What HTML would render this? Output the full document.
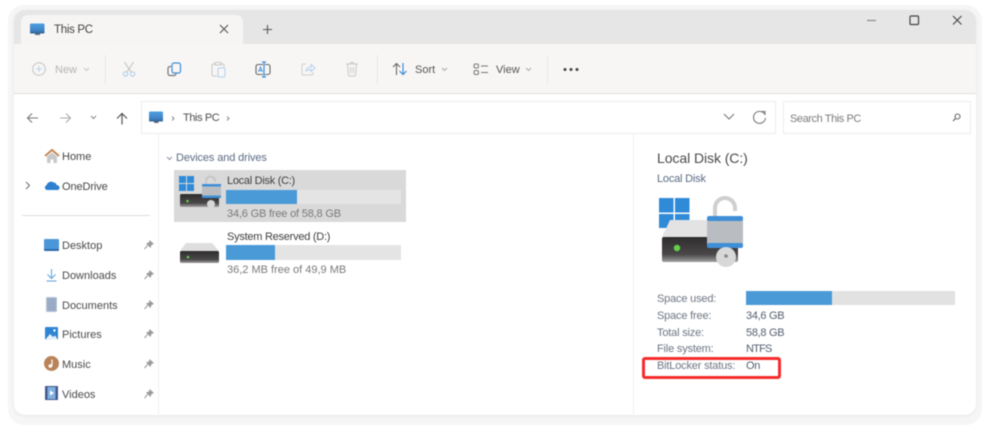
<!DOCTYPE html>
<html><head><meta charset="utf-8"><style>
html,body{margin:0;padding:0;background:#fff}
#p{position:relative;width:990px;height:432px;overflow:hidden;background:#fff;font-family:"Liberation Sans",sans-serif;color:#444;filter:blur(.6px)}
#p *{box-sizing:border-box}
.t{position:absolute;white-space:nowrap;font-size:11px;line-height:14px;color:#4a4a4a}
.b{position:absolute}
svg{position:absolute;overflow:visible}
.g{color:#6d7583;letter-spacing:-.18px}
.v{color:#555e6e;letter-spacing:-.3px}
</style></head><body><div id="p">
<svg width="0" height="0" style="left:0;top:0"><defs>
<linearGradient id="mon" x1="0" y1="0" x2="0" y2="1"><stop offset="0" stop-color="#4f9fe2"/><stop offset=".7" stop-color="#3f83c6"/><stop offset="1" stop-color="#2f5f8f"/></linearGradient>
<linearGradient id="drv" x1="0" y1="0" x2="0" y2="1"><stop offset="0" stop-color="#2e2c2c"/><stop offset=".7" stop-color="#4a4848"/><stop offset="1" stop-color="#a0a0a0"/></linearGradient>
</defs></svg>
<div class="b" style="left:8px;top:5px;width:974px;height:420px;border-radius:16px;background:#f6f6f6"></div>
<div class="b" style="left:14px;top:10px;width:962px;height:405px;border-radius:11px;background:#fff;overflow:hidden;box-shadow:0 1px 3px #e6e6e6">
 <div class="b" style="left:0;top:0;width:962px;height:34px;background:#e6e6e6"></div>
 <div class="b" style="left:7px;top:5px;width:222px;height:29px;background:#f6f5f4;border-radius:7px 7px 0 0"></div>
 <div class="b" style="left:0;top:34px;width:962px;height:50px;background:#f7f6f5;border-bottom:1px solid #dedede"></div>
</div>

<!-- tab -->
<svg style="left:30px;top:23px" width="15" height="14"><rect x="0" y="0.500" width="14.500" height="10" rx="1" fill="url(#mon)"/><rect x="5" y="10.500" width="5" height="1.500" fill="#667"/></svg>
<div class="t" style="left:54px;top:23px;font-size:11.500px;color:#444;letter-spacing:-.3px">This PC</div>
<svg style="left:219px;top:24px" width="10" height="10"><path d="M1 1L9 9M9 1L1 9" stroke="#555" stroke-width="1.100"/></svg>
<svg style="left:262px;top:24px" width="11" height="11"><path d="M5.500 1V10M1 5.500H10" stroke="#555" stroke-width="1.100"/></svg>

<!-- window controls -->
<svg style="left:866px;top:14px" width="102" height="14"><path d="M1 6.500H10" stroke="#8a8a8a" stroke-width="1.200"/><rect x="44" y="2" width="8.500" height="8.500" rx="1" fill="none" stroke="#444" stroke-width="1.200"/><path d="M87 2L95.500 10.500M95.500 2L87 10.500" stroke="#444" stroke-width="1.100"/></svg>

<!-- toolbar -->
<svg style="left:32px;top:62px" width="15" height="15"><circle cx="7" cy="7" r="6.300" fill="none" stroke="#c4c4c4"/><path d="M7 4V10M4 7H10" stroke="#bcd3ea" stroke-width="1"/></svg>
<div class="t" style="left:55px;top:63px;color:#b4b4b4">New</div>
<svg style="left:83px;top:67px" width="7" height="5"><path d="M1 1L3.500 3.500L6 1" fill="none" stroke="#c4c4c4"/></svg>
<div class="b" style="left:105px;top:55px;width:1px;height:29px;background:#e6e6e6"></div>
<svg style="left:122px;top:61px" width="15" height="17"><path d="M2.500 1L9 11M11.500 1L5 11" stroke="#c0c0c0" fill="none"/><circle cx="3.500" cy="13" r="2.200" fill="none" stroke="#a9c9ea"/><circle cx="10.500" cy="13" r="2.200" fill="none" stroke="#a9c9ea"/></svg>
<svg style="left:167px;top:62px" width="15" height="15"><rect x="5" y="1" width="8.500" height="10" rx="2" fill="none" stroke="#3e8ed8" stroke-width="1.200"/><path d="M4 4.500H3A2 2 0 0 0 1 6.500V11.500A2 2 0 0 0 3 13.500H7A2 2 0 0 0 9 11.500" fill="none" stroke="#777" stroke-width="1.200"/></svg>
<svg style="left:211px;top:61px" width="15" height="17"><path d="M4 3H2A1 1 0 0 0 1 4V14A1 1 0 0 0 2 15H6M10 3H12A1 1 0 0 1 13 4V6" fill="none" stroke="#c8c8c8"/><rect x="4" y="1.500" width="6" height="2.500" fill="none" stroke="#c8c8c8"/><rect x="7" y="7" width="7" height="9" rx="1" fill="none" stroke="#b3d1ee"/></svg>
<svg style="left:255px;top:61px" width="17" height="17"><path d="M8 3.500H3A2 2 0 0 0 1 5.500V11.500A2 2 0 0 0 3 13.500H8M10 3.500H13A2 2 0 0 1 15 5.500V11.500A2 2 0 0 1 13 13.500H10" fill="none" stroke="#666" stroke-width="1.100"/><path d="M9 1V16M7 1H11M7 16H11" fill="none" stroke="#3e8ed8" stroke-width="1.200"/><path d="M3.500 11L5.500 6L7.500 11M4.500 9.500H6.500" fill="none" stroke="#3e8ed8" stroke-width=".9"/></svg>
<svg style="left:301px;top:62px" width="15" height="15"><path d="M5 2H2.500A1.500 1.500 0 0 0 1 3.500V11.500A1.500 1.500 0 0 0 2.500 13H10.500A1.500 1.500 0 0 0 12 11.500V10" fill="none" stroke="#cfcfcf"/><path d="M5 9C5.500 6 8 5 10 5V2.500L14 6L10 9.500V7.500C8 7.500 6.500 8 5 9Z" fill="none" stroke="#b3d1ee"/></svg>
<svg style="left:345px;top:61px" width="14" height="16"><path d="M1 3H13M5 3L5.500 1.500H8.500L9 3M2.500 3L3.500 14A1 1 0 0 0 4.500 15H9.500A1 1 0 0 0 10.500 14L11.500 3M5.700 6V12M8.300 6V12" fill="none" stroke="#c8c8c8"/></svg>
<div class="b" style="left:377px;top:55px;width:1px;height:29px;background:#e6e6e6"></div>
<svg style="left:392px;top:62px" width="16" height="14"><path d="M4.500 13V1.500M1 5L4.500 1.500L8 5" fill="none" stroke="#666" stroke-width="1.100"/><path d="M11 1V12.500M7.500 9L11 12.500L14.500 9" fill="none" stroke="#3e8ed8" stroke-width="1.200"/></svg>
<div class="t" style="left:415px;top:63px;color:#555">Sort</div>
<svg style="left:441px;top:67px" width="7" height="5"><path d="M1 1L3.500 3.500L6 1" fill="none" stroke="#aaa"/></svg>
<svg style="left:473px;top:63px" width="16" height="13"><rect x="1" y="1" width="4.500" height="4" rx="1.500" fill="none" stroke="#777"/><rect x="1" y="7.500" width="4.500" height="4" rx="1.500" fill="none" stroke="#777"/><path d="M8 3H15M8 9.500H15" stroke="#777"/></svg>
<div class="t" style="left:496px;top:63px;color:#555">View</div>
<svg style="left:525px;top:67px" width="7" height="5"><path d="M1 1L3.500 3.500L6 1" fill="none" stroke="#aaa"/></svg>
<div class="b" style="left:547px;top:55px;width:1px;height:29px;background:#e6e6e6"></div>
<svg style="left:563px;top:67px" width="16" height="5"><circle cx="2" cy="2.500" r="1.500" fill="#444"/><circle cx="8" cy="2.500" r="1.500" fill="#444"/><circle cx="14" cy="2.500" r="1.500" fill="#444"/></svg>

<!-- nav -->
<svg style="left:26px;top:112px" width="13" height="12"><path d="M12 6H1.500M6 1.500L1.500 6L6 10.500" fill="none" stroke="#777" stroke-width="1.100"/></svg>
<svg style="left:59px;top:112px" width="13" height="12"><path d="M1 6H11.500M7 1.500L11.500 6L7 10.500" fill="none" stroke="#aaa" stroke-width="1.100"/></svg>
<svg style="left:90px;top:115px" width="7" height="5"><path d="M1 1L3.500 3.500L6 1" fill="none" stroke="#888"/></svg>
<svg style="left:116px;top:112px" width="12" height="13"><path d="M6 12.500V1.500M1 6.500L6 1.500L11 6.500" fill="none" stroke="#555" stroke-width="1.200"/></svg>
<div class="b" style="left:141px;top:101px;width:635px;height:33px;border:1px solid #ececec;background:#fff"></div>
<svg style="left:149px;top:111px" width="15" height="14"><rect x="0" y="0.500" width="14" height="10" rx="1" fill="url(#mon)"/><rect x="5" y="10.500" width="4.500" height="1.500" fill="#667"/></svg>
<svg style="left:171px;top:116px" width="5" height="6"><path d="M1 .5L3 2.500L1 4.500" fill="none" stroke="#888"/></svg>
<div class="t" style="left:183px;top:111px;color:#4e4e4e;font-size:11px;letter-spacing:-.4px">This PC</div>
<svg style="left:226px;top:116px" width="5" height="6"><path d="M1 .5L3 2.500L1 4.500" fill="none" stroke="#888"/></svg>
<svg style="left:723px;top:113px" width="12" height="8"><path d="M1 1L6 6L11 1" fill="none" stroke="#777" stroke-width="1.100"/></svg>
<svg style="left:752px;top:110px" width="15" height="15"><path d="M12.500 4A6 6 0 1 0 13.500 8" fill="none" stroke="#777" stroke-width="1.100"/><path d="M9.500 1.500H13V5" fill="none" stroke="#777" stroke-width="1.100"/></svg>
<div class="b" style="left:783px;top:101px;width:188px;height:33px;border:1px solid #ececec;background:#fff"></div>
<div class="t" style="left:790px;top:112px;color:#7c7c7c;font-size:11px;letter-spacing:-.42px">Search This PC</div>
<svg style="left:952px;top:113px" width="9" height="10"><circle cx="5.500" cy="3.500" r="2.500" fill="none" stroke="#666" stroke-width="1.100"/><path d="M3.500 5.500L1 8" stroke="#666" stroke-width="1.200"/></svg>

<!-- splitters -->
<div class="b" style="left:158px;top:134px;width:1px;height:280px;background:#f0f0f0"></div>
<div class="b" style="left:633px;top:134px;width:1px;height:280px;background:#f0f0f0"></div>

<!-- sidebar -->
<svg style="left:44px;top:149px" width="16" height="15"><path d="M1 7L8 1L15 7" fill="none" stroke="#c58a5a" stroke-width="2"/><path d="M3 7.500L8 3.500L13 7.500V14H9.500V10.500H6.500V14H3Z" fill="#c9c9c9"/></svg>
<div class="t" style="left:62px;top:150px;color:#444">Home</div>
<svg style="left:25px;top:181px" width="6" height="9"><path d="M1 1L4.500 4.500L1 8" fill="none" stroke="#777" stroke-width="1.100"/></svg>
<svg style="left:44px;top:180px" width="16" height="11"><path d="M3 10A2.500 2.500 0 0 1 2.500 5.200C3.500 2 7.500 0.500 9.500 2.500C11 2.500 12.500 3.500 12.500 5C14.500 5 15.500 6.500 15.500 8C15.500 9 14.500 10 13.500 10Z" fill="#2f7fd0"/></svg>
<div class="t" style="left:62px;top:180px;color:#444;letter-spacing:-.1px">OneDrive</div>
<div class="b" style="left:22px;top:215px;width:128px;height:1px;background:#dfdfdf"></div>

<div class="b" style="left:44px;top:239px;width:15px;height:12px;background:#4a96d8;border-radius:1px;border-bottom:2px solid #2e6cab"></div>
<div class="t" style="left:62px;top:239px;color:#4a4a4a">Desktop</div>
<svg style="left:46px;top:268px" width="11" height="14"><path d="M5.500 1V10M1.500 6.500L5.500 10.500L9.500 6.500M0.500 13H10.500" fill="none" stroke="#5ba0dc" stroke-width="1"/></svg>
<div class="t" style="left:62px;top:269px;color:#4a4a4a">Downloads</div>
<div class="b" style="left:46px;top:297px;width:11px;height:15px;background:#98aac4;border-radius:1px;border:1px solid #b8c4d6"></div>
<div class="t" style="left:62px;top:299px;color:#4a4a4a">Documents</div>
<svg style="left:45px;top:327px" width="13" height="13"><rect width="13" height="13" rx="1" fill="#2f85d5"/><path d="M0 13L5 7L8 10L10 8.500L13 13Z" fill="#e8f1fa"/><circle cx="9.500" cy="3.500" r="1.200" fill="#fff"/></svg>
<div class="t" style="left:62px;top:328px;color:#4a4a4a">Pictures</div>
<svg style="left:44px;top:356px" width="15" height="15"><circle cx="7.500" cy="7.500" r="7.500" fill="#b9835a"/><path d="M8 3.500V10" stroke="#fff" stroke-width="1.200"/><circle cx="6.300" cy="10" r="1.800" fill="#fff"/></svg>
<div class="t" style="left:62px;top:358px;color:#4a4a4a">Music</div>
<svg style="left:45px;top:386px" width="13" height="14"><rect width="13" height="14" fill="#44598f"/><rect x="2.500" y="1" width="8" height="12" fill="#7fb0e0"/><path d="M5 4.500L9 7L5 9.500Z" fill="#fff"/></svg>
<div class="t" style="left:62px;top:388px;color:#4a4a4a">Videos</div>
<svg style="left:143px;top:239px" width="12" height="160" fill="#9a9a9a"><g id="pin"><path d="M6.500 1L11 5L8.500 6L7.500 9L3 4.500L6 3.500Z"/><path d="M4.500 6.500L1.500 10" stroke="#9a9a9a"/></g><use href="#pin" y="30"/><use href="#pin" y="60"/><use href="#pin" y="89"/><use href="#pin" y="119"/><use href="#pin" y="149"/></svg>

<!-- devices -->
<svg style="left:166px;top:156px" width="7" height="5"><path d="M1 1L3.500 3.500L6 1" fill="none" stroke="#8a93a3"/></svg>
<div class="t" style="left:176px;top:151px;color:#5b6a84;letter-spacing:-.12px">Devices and drives</div>
<div class="b" style="left:174px;top:170px;width:232px;height:52px;background:#d9d9d9"></div>

<svg style="left:179px;top:175px" width="42" height="35">
<g fill="#2f8ad8"><rect y="1" width="7" height="7"/><rect x="8" y="1" width="7" height="7"/><rect y="9" width="7" height="7"/><rect x="8" y="9" width="7" height="7"/></g>
<rect x="1" y="19" width="39" height="13" rx="1.500" fill="url(#drv)"/><circle cx="8.500" cy="26" r="1.300" fill="#63d04a"/>
<path d="M27 9V6A4.500 4.500 0 0 1 36 6V7" fill="none" stroke="#c4c4c4" stroke-width="1.800"/><rect x="23" y="9" width="19" height="14" rx="1.500" fill="#b9bdc2"/><rect x="23" y="9" width="19" height="2.500" fill="#3f8fd6"/><rect x="23" y="20.500" width="19" height="2.500" fill="#3f8fd6"/><circle cx="32" cy="29" r="4" fill="#d8d8d8"/>
</svg>
<div class="t" style="left:227px;top:174px;color:#3f3f3f;letter-spacing:-.28px">Local Disk (C:)</div>
<div class="b" style="left:226px;top:190px;width:175px;height:14px;background:#e4e4e4"></div>
<div class="b" style="left:226px;top:190px;width:71px;height:14px;background:#4a9ad8"></div>
<div class="t" style="left:227px;top:207px;color:#7a7a7a;letter-spacing:-.18px">34,6 GB free of 58,8 GB</div>

<svg style="left:179px;top:242px" width="40" height="24"><path d="M7 1H33L40 9H1Z" fill="#dedede"/><rect x="1" y="9" width="39" height="12" rx="1.500" fill="url(#drv)"/><circle cx="9" cy="15" r="1.300" fill="#63d04a"/></svg>
<div class="t" style="left:227px;top:230px;color:#3f3f3f;letter-spacing:-.25px">System Reserved (D:)</div>
<div class="b" style="left:226px;top:245px;width:175px;height:15px;background:#e4e4e4"></div>
<div class="b" style="left:226px;top:245px;width:49px;height:15px;background:#4a9ad8"></div>
<div class="t" style="left:227px;top:263px;color:#7a7a7a">36,2 MB free of 49,9 MB</div>

<!-- details -->
<div class="t" style="left:657px;top:150px;font-size:14px;line-height:17px;color:#4a4a4a;letter-spacing:-.07px">Local Disk (C:)</div>
<div class="t" style="left:657px;top:172px;color:#5b6a84;letter-spacing:-.2px">Local Disk</div>
<svg style="left:659px;top:196px" width="86" height="72">
<g fill="#2f8ad8"><rect y="2" width="14.500" height="14.500"/><rect x="16" y="2" width="14.500" height="14.500"/><rect y="18" width="14.500" height="14"/><rect x="16" y="18" width="14.500" height="14"/></g>
<path d="M11 24H62V41H3Z" fill="#e3e3e3"/>
<rect x="3" y="41" width="76" height="25" rx="2" fill="url(#drv)"/><circle cx="18" cy="52" r="3.200" fill="#63d04a"/>
<path d="M56 20V12A10 10 0 0 1 76 12V15" fill="none" stroke="#cfcfcf" stroke-width="4"/>
<rect x="48" y="20" width="36" height="32" rx="3" fill="#b9bdc2"/><rect x="48" y="20" width="36" height="5" rx="2" fill="#3f8fd6"/><rect x="48" y="47" width="36" height="5" rx="2" fill="#3f8fd6"/>
<circle cx="67" cy="61" r="10" fill="#d8d8d8"/><circle cx="67" cy="60" r="1.800" fill="#888"/>
</svg>
<div class="t g" style="left:657px;top:292px">Space used:</div>
<div class="b" style="left:746px;top:291px;width:209px;height:14px;background:#e2e2e2"></div>
<div class="b" style="left:746px;top:291px;width:86px;height:14px;background:#4a9ad8"></div>
<div class="t g" style="left:657px;top:309px">Space free:</div><div class="t v" style="left:746px;top:309px">34,6 GB</div>
<div class="t g" style="left:657px;top:326px">Total size:</div><div class="t v" style="left:746px;top:326px">58,8 GB</div>
<div class="t g" style="left:657px;top:342px">File system:</div><div class="t v" style="left:746px;top:342px;letter-spacing:-.8px">NTFS</div>
<div class="t g" style="left:657px;top:359px">BitLocker status:</div><div class="t v" style="left:746px;top:359px">On</div>
<div class="b" style="left:642px;top:357px;width:139px;height:22px;border:3px solid #f52c2c;border-radius:3px"></div>
</div></body></html>
